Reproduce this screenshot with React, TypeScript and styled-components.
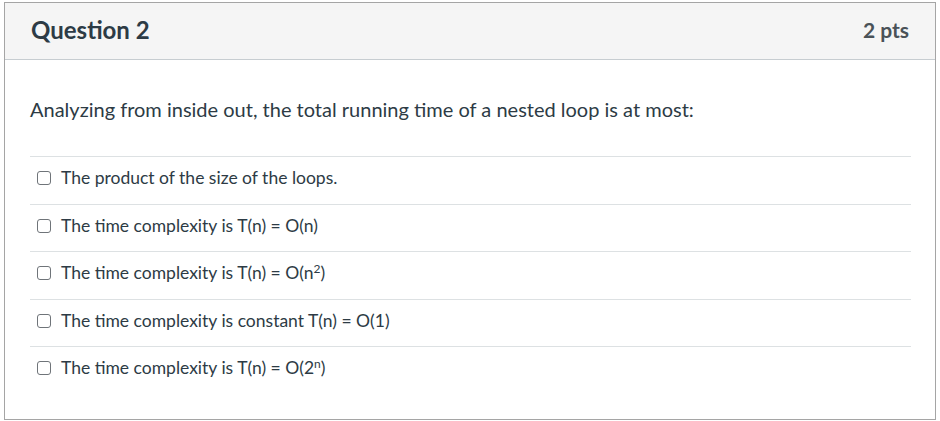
import React from "react";
import styled, { createGlobalStyle } from "styled-components";

const GlobalStyle = createGlobalStyle`
  html, body {
    margin: 0;
    padding: 0;
    background: #ffffff;
    font-family: Lato, "Liberation Sans", sans-serif;
    color: #2d3b45;
  }
`;

type Answer = { id: string; label: React.ReactNode };

const answers: Answer[] = [
  { id: "a1", label: "The product of the size of the loops." },
  { id: "a2", label: "The time complexity is T(n) = O(n)" },
  {
    id: "a3",
    label: (
      <>
        The time complexity is T(n) = O(n<sup>2</sup>)
      </>
    ),
  },
  { id: "a4", label: "The time complexity is constant T(n) = O(1)" },
  {
    id: "a5",
    label: (
      <>
        The time complexity is T(n) = O(2<sup>n</sup>)
      </>
    ),
  },
];

function App() {
  return (
    <>
      <GlobalStyle />
      <Card>
        <Header>
          <Title>Question 2</Title>
          <Points>2 pts</Points>
        </Header>
        <Body>
          <QuestionText>
            Analyzing from inside out, the total running time of a nested loop
            is at most:
          </QuestionText>
          <AnswerList>
            {answers.map((a) => (
              <AnswerRow key={a.id}>
                <Box type="checkbox" id={a.id} />
                <AnswerLabel htmlFor={a.id}>{a.label}</AnswerLabel>
              </AnswerRow>
            ))}
          </AnswerList>
        </Body>
      </Card>
    </>
  );
}

export default App;

const Card = styled.div`
  margin: 2px 0 0 4px;
  width: 932px;
  height: 418px;
  box-sizing: border-box;
  border: 1px solid #a5a5a5;
  background: #ffffff;
`;

const Header = styled.div`
  height: 57px;
  box-sizing: border-box;
  background: #f5f5f5;
  border-bottom: 1px solid #c7cdd1;
  display: flex;
  align-items: center;
  justify-content: space-between;
  padding: 0 26px 4px 26px;
`;

const Title = styled.h2`
  margin: 0;
  font-size: 24px;
  font-weight: 700;
  color: #2d3b45;
`;

const Points = styled.div`
  font-size: 21px;
  font-weight: 700;
  color: #4a5258;
`;

const Body = styled.div`
  padding: 36px 24px 0 25px;
`;

const QuestionText = styled.p`
  margin: 0 0 33px 0;
  font-size: 20px;
  line-height: 27px;
  color: #2d3b45;
`;

const AnswerList = styled.div`
  display: flex;
  flex-direction: column;
`;

const AnswerRow = styled.div`
  display: flex;
  align-items: center;
  gap: 10px;
  height: 47.5px;
  box-sizing: border-box;
  border-top: 1px solid #dde1e3;
  padding: 0 0 4px 7px;
`;

const Box = styled.input`
  appearance: none;
  margin: 0;
  width: 14px;
  height: 14px;
  box-sizing: border-box;
  border: 1.5px solid #6f7479;
  border-radius: 3px;
  background: #ffffff;
  flex: none;
`;

const AnswerLabel = styled.label`
  font-size: 17.5px;
  color: #2d3b45;
  line-height: 22px;

  sup {
    font-size: 12px;
    vertical-align: 6px;
    line-height: 0;
  }
`;
